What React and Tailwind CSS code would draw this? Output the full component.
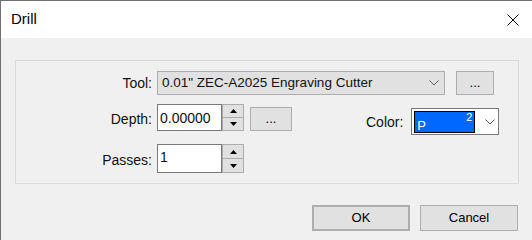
const font = { fontFamily: '"Liberation Sans", Arial, sans-serif' };

function Chevron({ className }) {
  return (
    <svg width="10" height="6" viewBox="0 0 10 6" className={className}>
      <path d="M0.5 0.5 L5 5 L9.5 0.5" fill="none" stroke="#606060" strokeWidth="1" />
    </svg>
  );
}

function Spinner({ h }) {
  return (
    <div className={`flex flex-col w-[22px] ${h}`}>
      <div className="flex-1 bg-[#e1e1e1] border border-[#adadad] flex items-center justify-center">
        <svg width="7" height="4" viewBox="0 0 7 4">
          <path d="M3.5 0 L7 4 L0 4 Z" fill="#000" />
        </svg>
      </div>
      <div className="flex-1 bg-[#e1e1e1] border border-t-0 border-[#adadad] flex items-center justify-center">
        <svg width="7" height="4" viewBox="0 0 7 4">
          <path d="M0 0 L7 0 L3.5 4 Z" fill="#000" />
        </svg>
      </div>
    </div>
  );
}

function Btn({ children, className }) {
  return (
    <div className={`bg-[#e1e1e1] border border-[#adadad] flex items-center justify-center text-[13px] text-black ${className}`}>
      {children}
    </div>
  );
}

export default function App() {
  return (
    <div className="w-[532px] h-[240px] flex flex-col bg-[#f0f0f0] border-l border-t border-[#707070] overflow-hidden" style={font}>
      {/* title bar */}
      <div className="h-[37px] bg-white flex items-center justify-between pl-[10px] pr-[13px] shrink-0">
        <span className="text-[15px] text-black">Drill</span>
        <svg width="12" height="12" viewBox="0 0 12 12">
          <path d="M0.5 0.5 L11.5 11.5 M11.5 0.5 L0.5 11.5" stroke="#000" strokeWidth="1" />
        </svg>
      </div>

      <div className="flex-1 flex flex-col text-[14px] text-[#111]">
        {/* group box */}
        <div className="ml-[14px] mt-[22px] w-[504px] h-[124px] border border-[#dcdcdc] flex flex-col">
          <div className="flex items-center mt-[10px]">
            <span className="w-[136px] text-right">Tool:</span>
            <div className="ml-[5px] w-[288px] h-[24px] bg-[#e1e1e1] border border-[#adadad] flex items-center justify-between pl-[4px] pr-[5px]">
              <span className="text-[13.5px] whitespace-nowrap">0.01" ZEC-A2025 Engraving Cutter</span>
              <Chevron />
            </div>
            <Btn className="ml-[11px] w-[38px] h-[24px]">...</Btn>
          </div>

          <div className="flex items-start mt-[9px]">
            <span className="w-[136px] text-right mt-[5px]">Depth:</span>
            <div className="ml-[5px] w-[65px] h-[27px] bg-white border border-[#7a7a7a] pl-[2px] pt-[3px] text-[14px]">
              0.00000
            </div>
            <Spinner h="h-[27px]" />
            <Btn className="ml-[6px] w-[42px] h-[24px] mt-[3px]">...</Btn>
            <span className="ml-[74px] mt-[8px]">Color:</span>
            <div className="ml-[8px] mt-[4px] w-[88px] h-[27px] bg-white border border-[#7a7a7a] flex items-center">
              <div className="ml-[2px] w-[61px] h-[22px] bg-[#0068ff] border border-black relative">
                <span className="absolute right-[2px] top-0 text-[11px] text-white leading-none">2</span>
                <span className="absolute left-[2px] bottom-0 text-[13px] text-white leading-none">P</span>
              </div>
              <Chevron className="ml-[10px]" />
            </div>
          </div>

          <div className="flex items-start mt-[9px]">
            <span className="w-[136px] text-right mt-[6px]">Passes:</span>
            <div className="ml-[5px] w-[65px] h-[29px] bg-white border border-[#7a7a7a] pl-[2px] pt-[2px] text-[14px]">
              1
            </div>
            <Spinner h="h-[29px]" />
          </div>
        </div>

        {/* dialog buttons */}
        <div className="flex mt-[21px] ml-[311px] gap-[10px]">
          <Btn className="w-[98px] h-[26px] border-2 border-[#0078d7]">OK</Btn>
          <Btn className="w-[98px] h-[26px]">Cancel</Btn>
        </div>
      </div>
    </div>
  );
}
